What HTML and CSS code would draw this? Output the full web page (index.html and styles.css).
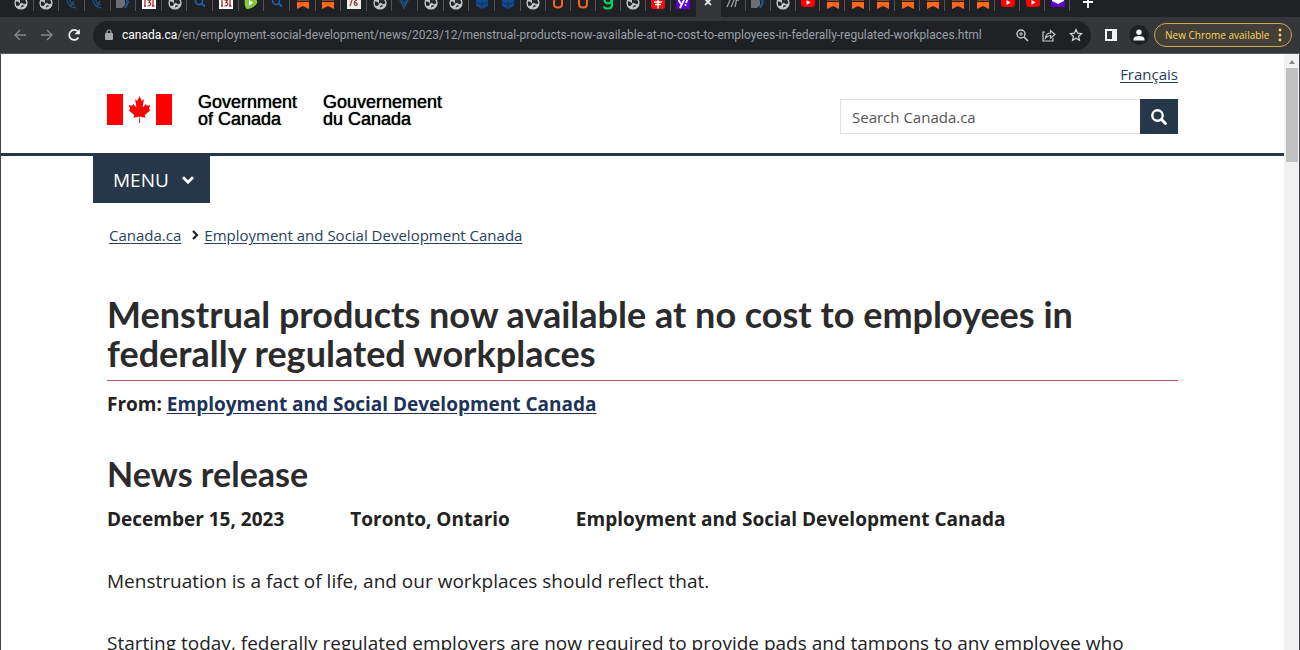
FILE: index.html
```html
<!DOCTYPE html>
<html lang="en">
<head>
    <meta charset="UTF-8">
    <meta name="viewport" content="width=device-width, initial-scale=1.0">
    <title>Menstrual products now available at no cost to employees in federally regulated workplaces</title>
    <link rel="stylesheet" href="styles.css">
</head>
<body>
    <!-- Tab icons -->
    <svg class="sprite" width="0" height="0" aria-hidden="true">
        <symbol id="globe" viewBox="0 4 14 10">
            <circle cx="7" cy="7" r="6" fill="#c3c6ca"/>
            <path d="M1.500 5.500l3 .8 1.500 1.400-1 1.500-2.800.8M6 2l2 2.500 3-.5 1.500 3-2.500 1-2-1.500-2 .5M7 11.500l1-2 2 .5" fill="#202124" stroke="#202124" stroke-width=".6"/>
            <circle cx="7" cy="7" r="6" fill="none" stroke="#c3c6ca" stroke-width="1.200"/>
        </symbol>
        <symbol id="dish" viewBox="0 4 14 10">
            <path d="M2 0c-1 6 2 11 9 12M5 1c-1 4 1 7 5 8M9 5l-4 6" fill="none" stroke="#1d4f78" stroke-width="1.400"/>
        </symbol>
        <symbol id="block" viewBox="0 4 14 10">
            <path d="M0 2h7l2 3v4l-3 3H0z" fill="#6a6f76"/>
            <path d="M9 1l3 5-3 6" fill="none" stroke="#1c5a9c" stroke-width="2"/>
        </symbol>
        <symbol id="b131" viewBox="0 4 14 10">
            <path d="M0 0h14v13H0z" fill="#fff"/>
            <path d="M2 10h2M3 4v6M10 10h2.500M11 4v6M5.500 4h3L7 6.500c3 0 2 4-1.500 3.300" fill="none" stroke="#a52a2a" stroke-width="1.300"/>
        </symbol>
        <symbol id="find" viewBox="0 4 14 10">
            <circle cx="6" cy="5" r="3.500" fill="none" stroke="#1b64b0" stroke-width="1.500"/>
            <path d="M8.500 7.500l3.500 3" stroke="#1b64b0" stroke-width="1.800"/>
        </symbol>
        <symbol id="rumble" viewBox="0 4 14 10">
            <path d="M1 2h10c3 3 3 5 0 7.500-2 2-5 3.500-8 3.500C1 12 0 7 1 2z" fill="#85c742"/>
            <path d="M5 4l4 2.500-4 3z" fill="#fff"/>
        </symbol>
        <symbol id="ribbon" viewBox="0 4 14 10">
            <path d="M1 6h12v7l-6-3-6 3z" fill="#ff6719"/>
            <path d="M1 2h12v2.500H1z" fill="#ff6719"/>
        </symbol>
        <symbol id="sheet" viewBox="0 4 14 10">
            <path d="M0 0h14v13H0z" fill="#eee"/>
            <path d="M3 10l2-6M10 4c-4 1-3 6-1 5.500s1.500-3-1-2.500" fill="none" stroke="#8d3a3a" stroke-width="1.200"/>
        </symbol>
        <symbol id="wing" viewBox="0 4 14 10">
            <path d="M1 2l5 10 5-10M4 4l3 5 1-5" fill="none" stroke="#1d5078" stroke-width="1.600"/>
        </symbol>
        <symbol id="cube" viewBox="0 4 14 10">
            <path d="M1 3l6-2 6 2v7l-6 3-6-3z" fill="#0d4b94"/>
            <path d="M1 6.500l6 2 6-2M7 5v8" fill="none" stroke="#202e4c"/>
        </symbol>
        <symbol id="cup" viewBox="0 4 14 10">
            <path d="M3 1v7q0 3.500 4 3.500T11 8V1" fill="none" stroke="#f26322" stroke-width="2"/>
        </symbol>
        <symbol id="gee" viewBox="0 4 14 10">
            <circle cx="7" cy="4" r="3.500" fill="none" stroke="#00d563" stroke-width="2.200"/>
            <path d="M11 1v8q0 3.500-4 3.500T3 10.500" fill="none" stroke="#00d563" stroke-width="2.200"/>
        </symbol>
        <symbol id="redbox" viewBox="0 4 14 10">
            <rect y="-1" width="14" height="14" rx="3" fill="#f30d0d"/>
            <path d="M3 6h8M4 8.500h6M7 3v9.500" stroke="#fff" stroke-width="1.500"/>
        </symbol>
        <symbol id="yahoo" viewBox="0 4 14 10">
            <path d="M0 0h14v13H0z" fill="#5f01d1"/>
            <path d="M2.500 4l2.500 4M8 4l-4 8M11.500 3l-1.500 4" stroke="#fff" stroke-width="1.800"/>
            <circle cx="9.500" cy="9" r="1" fill="#fff"/>
        </symbol>
        <symbol id="close" viewBox="0 4 14 10">
            <path d="M4 3l6 6M10 3l-6 6" stroke="#fff" stroke-width="1.600"/>
        </symbol>
        <symbol id="bars" viewBox="0 4 14 10">
            <path d="M1 11L5 2M5 11L9 2M9 11l1.500-7H13" fill="none" stroke="#9a9ca0" stroke-width="1.300"/>
        </symbol>
        <symbol id="play" viewBox="0 4 14 10">
            <rect y="1" width="14" height="10" rx="3" fill="#f00"/>
            <path d="M5.500 4l4 2.500-4 2.500z" fill="#fff"/>
        </symbol>
        <symbol id="mail" viewBox="0 4 14 10">
            <path d="M0 0h14v11H0z" fill="#5f01d1"/>
            <path d="M1 2h12v3L7 8 1 5z" fill="#fff"/>
        </symbol>
    </svg>

    <header class="browser">
        <div class="tab-strip">
            <div class="tab-group first">
                <span class="tab"><svg><use href="#globe"/></svg></span>
                <span class="tab"><svg><use href="#globe"/></svg></span>
                <span class="tab"><svg><use href="#dish"/></svg></span>
                <span class="tab"><svg><use href="#dish"/></svg></span>
                <span class="tab"><svg><use href="#block"/></svg></span>
                <span class="tab"><svg><use href="#b131"/></svg></span>
                <span class="tab"><svg><use href="#globe"/></svg></span>
                <span class="tab"><svg><use href="#find"/></svg></span>
                <span class="tab"><svg><use href="#b131"/></svg></span>
                <span class="tab"><svg><use href="#rumble"/></svg></span>
                <span class="tab"><svg><use href="#find"/></svg></span>
                <span class="tab"><svg><use href="#ribbon"/></svg></span>
                <span class="tab"><svg><use href="#ribbon"/></svg></span>
                <span class="tab"><svg><use href="#sheet"/></svg></span>
                <span class="tab"><svg><use href="#globe"/></svg></span>
                <span class="tab"><svg><use href="#wing"/></svg></span>
                <span class="tab"><svg><use href="#globe"/></svg></span>
                <span class="tab"><svg><use href="#globe"/></svg></span>
                <span class="tab"><svg><use href="#cube"/></svg></span>
                <span class="tab"><svg><use href="#cube"/></svg></span>
                <span class="tab"><svg><use href="#globe"/></svg></span>
            </div>
            <div class="tab-group second">
                <span class="tab"><svg><use href="#cup"/></svg></span>
                <span class="tab"><svg><use href="#cup"/></svg></span>
                <span class="tab"><svg><use href="#gee"/></svg></span>
                <span class="tab"><svg><use href="#globe"/></svg></span>
                <span class="tab"><svg><use href="#redbox"/></svg></span>
                <span class="tab before-active"><svg><use href="#yahoo"/></svg></span>
                <button class="tab active" aria-label="Close tab"><svg><use href="#close"/></svg></button>
                <span class="tab"><svg><use href="#bars"/></svg></span>
                <span class="tab"><svg><use href="#block"/></svg></span>
                <span class="tab"><svg><use href="#globe"/></svg></span>
                <span class="tab"><svg><use href="#play"/></svg></span>
                <span class="tab"><svg><use href="#ribbon"/></svg></span>
                <span class="tab"><svg><use href="#ribbon"/></svg></span>
                <span class="tab"><svg><use href="#ribbon"/></svg></span>
                <span class="tab"><svg><use href="#ribbon"/></svg></span>
                <span class="tab"><svg><use href="#ribbon"/></svg></span>
                <span class="tab"><svg><use href="#ribbon"/></svg></span>
                <span class="tab"><svg><use href="#ribbon"/></svg></span>
                <span class="tab"><svg><use href="#play"/></svg></span>
                <span class="tab"><svg><use href="#play"/></svg></span>
                <span class="tab"><svg><use href="#mail"/></svg></span>
            </div>
            <button class="new-tab" aria-label="New tab">
                <svg viewBox="0 4 14 10"><path d="M7 0v12M2 6h10" stroke="#fff" stroke-width="1.800"/></svg>
            </button>
        </div>

        <div class="toolbar">
            <div class="nav-buttons">
                <button class="icon-btn" aria-label="Back">
                    <svg width="14" height="14" viewBox="0 0 14 14" fill="none" stroke="#85878b" stroke-width="1.400"><path d="M13 7H2M7 2L2 7l5 5"/></svg>
                </button>
                <button class="icon-btn" aria-label="Forward">
                    <svg width="14" height="14" viewBox="0 0 14 14" fill="none" stroke="#85878b" stroke-width="1.400"><path d="M1 7h11M7 2l5 5-5 5"/></svg>
                </button>
                <button class="icon-btn" aria-label="Reload">
                    <svg width="14" height="14" viewBox="0 0 14 14"><path d="M11.500 9.500A5 5 0 1 1 10.800 3.500" fill="none" stroke="#f1f3f4" stroke-width="1.700"/><path d="M12.800 1v5.200H7.500z" fill="#f1f3f4"/></svg>
                </button>
            </div>
            <div class="address">
                <svg width="10" height="12" viewBox="0 0 10 12"><rect x="1" y="4" width="8" height="7" rx="1" fill="#a4a6aa"/><path d="M3 5V3a2 2 0 0 1 4 0v2" fill="none" stroke="#a4a6aa" stroke-width="1.200"/></svg>
                <span class="url"><b>canada.ca</b>/en/employment-social-development/news/2023/12/menstrual-products-now-available-at-no-cost-to-employees-in-federally-regulated-workplaces.html</span>
                <button class="icon-btn" aria-label="Zoom">
                    <svg width="14" height="14" viewBox="0 0 14 14" fill="none" stroke="#c8cacd"><circle cx="6" cy="6" r="4" stroke-width="1.400"/><path d="M9 9l4 4" stroke-width="1.600"/><path d="M4 6h4M6 4v4"/></svg>
                </button>
                <button class="icon-btn" aria-label="Share">
                    <svg width="14" height="14" viewBox="0 0 14 14" fill="none" stroke="#c8cacd" stroke-width="1.200"><path d="M3 4H1v9h10v-3M3.500 10c.5-3.500 2-5 5-5V2.500L13 6.500 8.500 10V7.500C6 7.500 4.800 8.500 3.500 10z"/></svg>
                </button>
                <button class="icon-btn" aria-label="Bookmark">
                    <svg width="14" height="14" viewBox="0 0 14 14" fill="none" stroke="#d4d6d9" stroke-width="1.200"><path d="M7 1.500l1.600 3.700 4 .4-3 2.700.9 4L7 10.200l-3.500 2.100.9-4-3-2.700 4-.4z"/></svg>
                </button>
            </div>
            <button class="icon-btn side-panel" aria-label="Side panel">
                <svg width="14" height="14" viewBox="0 0 14 14"><path d="M1 1h12v12H1z" fill="#f1f3f4"/><path d="M3 3h5v8H3z" fill="#35363a"/></svg>
            </button>
            <button class="profile" aria-label="Profile">
                <svg width="12" height="12" viewBox="0 0 12 12" fill="#f1f3f4"><circle cx="6" cy="3.200" r="2.700"/><path d="M.5 11.500V10C.5 8 3 7 6 7s5.500 1 5.500 3v1.500z"/></svg>
            </button>
            <button class="update">
                New Chrome available
                <svg width="4" height="14" viewBox="0 0 4 14" fill="#fdd663"><circle cx="2" cy="2" r="1.400"/><circle cx="2" cy="7" r="1.400"/><circle cx="2" cy="12" r="1.400"/></svg>
            </button>
        </div>
    </header>

    <div class="viewport">
        <div class="page">
            <div class="site-header">
                <div class="container header-row">
                    <a class="brand" href="#">
                        <svg width="65" height="31" viewBox="0 0 65 31" fill="#f00" aria-hidden="true">
                            <path d="M0 0h16v31H0zM49 0h16v31H49z"/>
                            <path transform="translate(4.200 -.6) scale(.00590 .00670)" d="M4890 4430l-45-863a95 95 0 0 1 111-98l859 151-116-320a65 65 0 0 1 20-73l941-762-212-99a65 65 0 0 1-34-79l186-572-542 115a65 65 0 0 1-73-38l-105-247-423 454a65 65 0 0 1-111-57l204-1052-327 189a65 65 0 0 1-91-27l-332-652-332 652a65 65 0 0 1-91 27l-327-189 204 1052a65 65 0 0 1-111 57l-423-454-105 247a65 65 0 0 1-73 38l-542-115 186 572a65 65 0 0 1-34 79l-212 99 941 762a65 65 0 0 1 20 73l-116 320 859-151a95 95 0 0 1 111 98l-45 863z"/>
                        </svg>
                        <span>Government<br>of Canada</span>
                        <span lang="fr">Gouvernement<br>du Canada</span>
                    </a>
                    <div class="header-tools">
                        <a class="lang" href="#" lang="fr">Français</a>
                        <form class="search">
                            <input type="search" id="q" placeholder="Search Canada.ca" aria-label="Search Canada.ca">
                            <button type="submit" aria-label="Search">
                                <svg width="16" height="16" viewBox="0 0 16 16" fill="none" stroke="#fff"><circle cx="6.500" cy="6.500" r="5.200" stroke-width="2.400"/><path d="M10.500 10.500l4 4" stroke-width="3" stroke-linecap="round"/></svg>
                            </button>
                        </form>
                    </div>
                </div>
            </div>

            <div class="container">
                <button class="menu">
                    MENU
                    <svg width="12" height="8" viewBox="0 0 12 8" fill="none" stroke="#fff" stroke-width="2.800"><path d="M1 1.200l5 5 5-5"/></svg>
                </button>

                <nav class="breadcrumb">
                    <a href="#">Canada.ca</a>
                    <svg width="7" height="10" viewBox="0 0 7 10" fill="none" stroke="#222" stroke-width="2.200"><path d="M1 1l4 4-4 4"/></svg>
                    <a href="#">Employment and Social Development Canada</a>
                </nav>

                <main>
                    <h1>Menstrual products now available at no cost to employees in federally regulated workplaces</h1>
                    <p class="from">From: <a href="#">Employment and Social Development Canada</a></p>

                    <h2>News release</h2>
                    <p class="release-info">
                        <span>December 15, 2023</span>
                        <span>Toronto, Ontario</span>
                        <span>Employment and Social Development Canada</span>
                    </p>

                    <p>Menstruation is a fact of life, and our workplaces should reflect that.</p>
                    <p>Starting today, federally regulated employers are now required to provide pads and tampons to any employee who menstruates.</p>
                </main>
            </div>
        </div>

        <div class="scrollbar">
            <svg width="6" height="4" viewBox="0 0 6 4"><path d="M3 0l3 4H0z" fill="#8a8a8a"/></svg>
            <div class="thumb"></div>
        </div>
    </div>
</body>
</html>
```
FILE: styles.css
```css
* {
    box-sizing: border-box;
}
body {
    margin: 0;
    height: 100vh;
    display: flex;
    flex-direction: column;
    overflow: hidden;
    font-family: "Open Sans", "Noto Sans", sans-serif;
    font-size: 19px;
    line-height: 31px;
    color: #222;
    background: #fff;
}
button {
    margin: 0;
    padding: 0;
    border: none;
    background: none;
    font-family: inherit;
    cursor: pointer;
}
svg {
    display: block;
    flex: none;
}
.sprite {
    position: absolute;
}

/* browser window */
.browser {
    flex: none;
    background: #202124;
}
.tab-strip {
    display: flex;
    height: 17px;
    padding-left: 8px;
}
.tab-group {
    display: flex;
}
.tab-group.first {
    width: 538px;
}
.tab-group.second {
    width: 524px;
}
.tab {
    flex: 1;
    display: flex;
    justify-content: center;
    align-items: flex-start;
    background: linear-gradient(#505256, #505256) right top / 1px 11px no-repeat;
}
.tab svg, .new-tab svg {
    width: 14px;
    height: 10px;
}
.tab.before-active {
    background: none;
}
.tab.active {
    background: #35363a;
}
.new-tab {
    display: flex;
    width: 36px;
    justify-content: center;
}
.toolbar {
    display: flex;
    align-items: center;
    height: 37px;
    padding: 0 8px 0 13px;
    background: #35363a;
    border-bottom: 1px solid #5a5b5e;
}
.icon-btn {
    display: flex;
    flex: none;
}
.nav-buttons {
    display: flex;
    gap: 13px;
    margin-right: 12px;
}
.address {
    flex: 1;
    min-width: 0;
    display: flex;
    align-items: center;
    gap: 13px;
    height: 29px;
    padding: 0 8px 0 11px;
    border-radius: 15px;
    background: #202124;
}
.url {
    flex: 1;
    min-width: 0;
    margin-left: -5px;
    overflow: hidden;
    white-space: nowrap;
    font-family: Roboto, sans-serif;
    font-size: 12px;
    line-height: 18px;
    color: #9aa0a6;
}
.url b {
    font-weight: normal;
    color: #fff;
}
.side-panel {
    margin: 0 11px 0 13px;
}
.profile {
    display: flex;
    flex: none;
    justify-content: center;
    align-items: center;
    width: 20px;
    height: 20px;
    margin-right: 5px;
    border-radius: 50%;
    background: #202124;
}
.update {
    display: flex;
    flex: none;
    justify-content: space-between;
    align-items: center;
    width: 138px;
    height: 24px;
    padding: 0 9px 0 10px;
    border: 1px solid #c9ab55;
    border-radius: 12px;
    background: #423f36;
    color: #fdd663;
    font-size: 10px;
    white-space: nowrap;
}

/* page */
.viewport {
    flex: 1;
    min-height: 0;
    display: flex;
    border: solid #45464a;
    border-width: 0 1px;
}
.page {
    flex: 1;
    min-width: 0;
    overflow: hidden;
}
.container {
    max-width: 1103px;
    margin: 0 auto;
    padding: 0 16px;
}
.site-header {
    border-bottom: 3px solid #26374a;
}
.header-row {
    display: flex;
    justify-content: space-between;
    height: 99px;
}
.brand {
    display: flex;
    align-items: flex-start;
    gap: 26px;
    padding-top: 40px;
    font-family: "Liberation Sans", Arial, sans-serif;
    font-size: 18px;
    line-height: 17px;
    color: #000;
    text-decoration: none;
    text-shadow: 0 0 1px #000;
}
.header-tools {
    display: flex;
    flex-direction: column;
    align-items: flex-end;
    gap: 14px;
    padding-top: 9px;
}
.lang {
    font-size: 15px;
    line-height: 22px;
    color: #284162;
}
.search {
    display: flex;
    height: 35px;
}
.search input {
    width: 300px;
    padding: 0 11px;
    border: 1px solid #e0e0e0;
    border-right: none;
    border-radius: 0;
    font-family: inherit;
    font-size: 15px;
    color: #555;
}
.search input::placeholder {
    color: #555;
}
.search button {
    display: flex;
    justify-content: center;
    align-items: center;
    width: 38px;
    background: #26374a;
}
.menu {
    display: flex;
    align-items: center;
    gap: 13px;
    height: 47px;
    margin-left: -14px;
    padding: 0 16px 0 20px;
    background: #26374a;
    color: #fff;
    font-size: 19px;
}
.breadcrumb {
    display: flex;
    align-items: center;
    margin-top: 21px;
    padding-left: 2px;
    font-size: 15px;
    line-height: 22px;
}
.breadcrumb svg {
    margin: 0 5px 0 11px;
}
a {
    color: #284162;
    text-underline-offset: 2px;
}
h1, h2 {
    margin: 0;
    font-family: Lato, sans-serif;
    font-weight: 700;
    color: #2b2b2b;
}
h1 {
    margin-top: 49px;
    padding-bottom: 7px;
    border-bottom: 1px solid #b9565c;
    font-size: 36px;
    line-height: 39px;
}
h2 {
    margin-top: 34px;
    font-size: 34px;
    line-height: 40px;
}
p {
    margin: 0 0 31px;
}
.from, .release-info {
    font-weight: 700;
}
.from {
    margin: 8px 0 0;
}
.from a {
    color: #1c3258;
}
.release-info {
    display: flex;
    gap: 66px;
    margin-top: 10px;
}

.scrollbar {
    display: flex;
    flex-direction: column;
    align-items: center;
    gap: 4px;
    width: 15px;
    padding: 6px 1px 0 2px;
    background: #f1f1f1;
}
.thumb {
    width: 100%;
    height: 94px;
    background: #c1c1c1;
}
```
